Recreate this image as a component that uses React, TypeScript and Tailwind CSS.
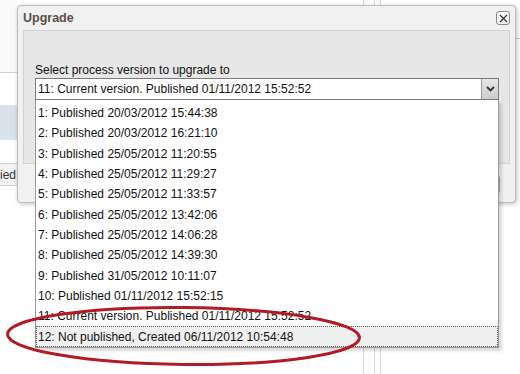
const versions = [
  '1: Published 20/03/2012 15:44:38',
  '2: Published 20/03/2012 16:21:10',
  '3: Published 25/05/2012 11:20:55',
  '4: Published 25/05/2012 11:29:27',
  '5: Published 25/05/2012 11:33:57',
  '6: Published 25/05/2012 13:42:06',
  '7: Published 25/05/2012 14:06:28',
  '8: Published 25/05/2012 14:39:30',
  '9: Published 31/05/2012 10:11:07',
  '10: Published 01/11/2012 15:52:15',
  '11: Current version. Published 01/11/2012 15:52:52',
  '12: Not published, Created 06/11/2012 10:54:48',
];

// index of the current version shown in the closed select
const current = 10;

export default function App() {
  return (
    <div className="relative w-[520px] h-[374px] overflow-hidden bg-white font-['Liberation_Sans',Arial,sans-serif] text-[12px] text-[#111]">
      {/* page behind the dialog */}
      <div className="flex h-full">
        <div className="w-[17px] flex flex-col">
          <div className="h-[73px] border-b border-[#d4d4d4] bg-[#fafafa]" />
          <div className="mt-[32px] h-[35px] bg-[#d8e2ea]" />
          <div className="mt-[23px] h-[23px] border-y border-[#cfcfcf] bg-[#f3f3f3] flex items-center justify-end pr-[1px] whitespace-nowrap text-[#333]">
            ied
          </div>
        </div>
        <div className="flex-1 flex">
          <div className="ml-[346px] w-[11px] border-l border-[#d9d9d9]" />
          <div className="w-[6px] border-l border-[#d9d9d9]" />
          <div className="flex-1 border-l border-[#d9d9d9] flex justify-end">
            <div className="mt-[38px] w-[4px] h-0 border-t border-[#cfcfcf]" />
          </div>
        </div>
      </div>

      {/* dialog */}
      <div className="absolute left-[17px] top-[5px] w-[499px] h-[198px] bg-[#f1f1f1] border border-[#bdbdbd] rounded-[4px] shadow-[1px_1px_4px_rgba(0,0,0,0.25)] flex flex-col">
        <div className="h-[24px] flex items-center justify-between px-[5px]">
          <span className="font-bold text-[12.5px] text-[#5b4f45]">Upgrade</span>
          <button className="w-[14px] h-[14px] rounded-[3px] border border-[#8a8a8a] bg-gradient-to-b from-white to-[#ececec] flex items-center justify-center">
            <svg width="9" height="9" viewBox="0 0 9 9">
              <path d="M1 1L8 8M8 1L1 8" stroke="#333" strokeWidth="1.2" />
            </svg>
          </button>
        </div>

        <div className="mx-[5px] h-[134px] bg-[#e7e7e7] border border-[#d2d2d2] pt-[32px] pl-[11px]">
          <div className="h-[14px] leading-[14px]">Select process version to upgrade to</div>
          <div className="relative mt-[1px] w-[464px] h-[22px] border border-[#7a7a7a] bg-white flex">
            <div className="flex-1 flex items-center pl-[2px] whitespace-nowrap">{versions[current]}</div>
            <div className="w-[17px] border-l border-[#9a9a9a] bg-gradient-to-b from-[#e6e6e6] to-[#cdcdcd] flex items-center justify-center">
              <svg width="9" height="6" viewBox="0 0 9 6">
                <path d="M1 1L4.5 4.5L8 1" stroke="#333" strokeWidth="1.8" fill="none" />
              </svg>
            </div>

            {/* open list */}
            <div className="absolute left-[-1px] top-[21px] w-[464px] bg-white border border-t-0 border-[#9a9a9a] pt-[3px] shadow-[3px_3px_3px_rgba(0,0,0,0.15)] z-10">
              {versions.map((v, i) =>
                i === versions.length - 1 ? (
                  <div
                    key={v}
                    className="h-[21px] flex items-center pl-[1px] border border-dotted border-[#555] bg-[#efefef] whitespace-nowrap"
                  >
                    {v}
                  </div>
                ) : (
                  <div key={v} className="h-[20.3px] flex items-center pl-[2px] whitespace-nowrap">
                    {v}
                  </div>
                )
              )}
            </div>
          </div>
        </div>

        <div className="mt-[11px] flex justify-end pr-[15px]">
          <button className="w-[70px] h-[19px] rounded-[3px] border border-[#a8a8a8] bg-gradient-to-b from-white to-[#e2e2e2] text-[11px]">
            Cancel
          </button>
        </div>
      </div>

      {/* annotation */}
      <svg className="absolute inset-0 pointer-events-none z-20" width="520" height="374" viewBox="0 0 520 374">
        <ellipse cx="183.5" cy="336" rx="176" ry="28.5" fill="none" stroke="#b01c21" strokeWidth="3" transform="rotate(0.6 183.5 336)" />
      </svg>
    </div>
  );
}
